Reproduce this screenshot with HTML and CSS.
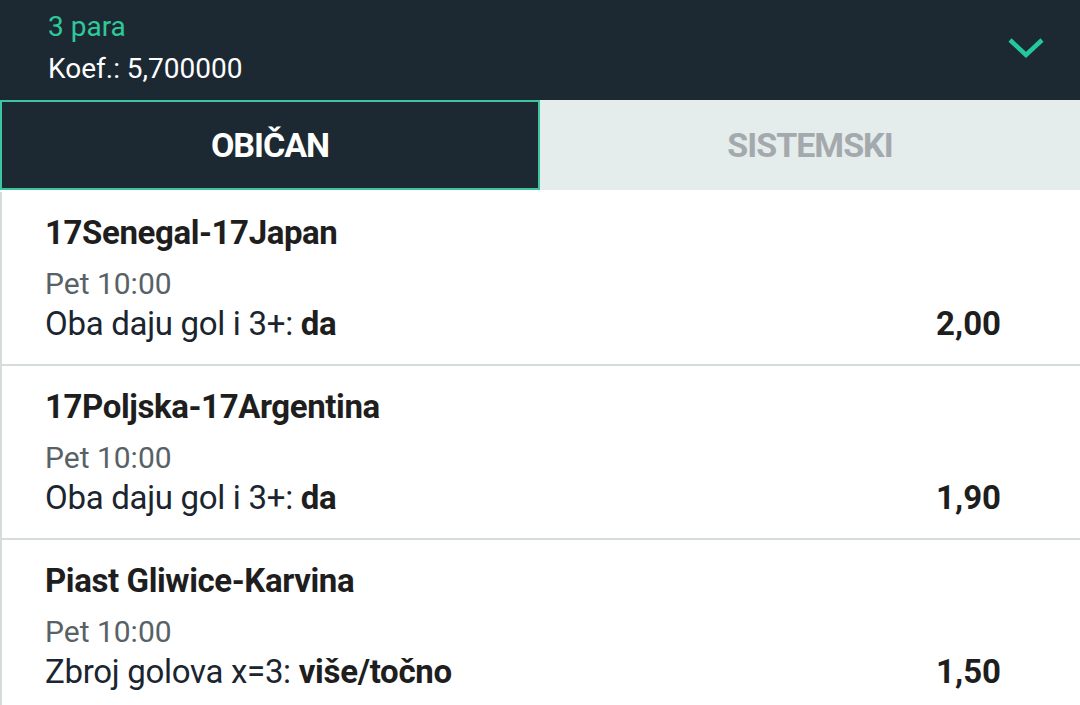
FILE: index.html
```html
<!DOCTYPE html>
<html lang="hr">
<head>
    <meta charset="UTF-8">
    <meta name="viewport" content="width=device-width, initial-scale=1.0">
    <title>Listić</title>
    <link rel="stylesheet" href="styles.css">
</head>
<body>
    <div class="summary">
        <div class="summary-text">
            <div class="pairs">3 para</div>
            <div class="odds-total">Koef.: 5,700000</div>
        </div>
        <svg class="chevron" width="40" height="24" viewBox="0 0 40 24">
            <polyline points="4,4 20,19 36,4" fill="none" stroke="#23c99a" stroke-width="4.5"/>
        </svg>
    </div>

    <div class="tabs">
        <div class="tab active">OBIČAN</div>
        <div class="tab">SISTEMSKI</div>
    </div>

    <div class="list">
        <div class="item">
            <div class="info">
                <div class="match">17Senegal-17Japan</div>
                <div class="time">Pet 10:00</div>
                <div class="bet">Oba daju gol i 3+: <b>da</b></div>
            </div>
            <div class="odd">2,00</div>
        </div>
        <div class="item">
            <div class="info">
                <div class="match">17Poljska-17Argentina</div>
                <div class="time">Pet 10:00</div>
                <div class="bet">Oba daju gol i 3+: <b>da</b></div>
            </div>
            <div class="odd">1,90</div>
        </div>
        <div class="item">
            <div class="info">
                <div class="match">Piast Gliwice-Karvina</div>
                <div class="time">Pet 10:00</div>
                <div class="bet">Zbroj golova x=3: <b>više/točno</b></div>
            </div>
            <div class="odd">1,50</div>
        </div>
    </div>
</body>
</html>
```

FILE: styles.css
```css
body {
    margin: 0;
    font-family: Roboto, "Liberation Sans", sans-serif;
    background-color: #fff;
    color: #1b2530;
    overflow: hidden;
}
.summary {
    display: flex;
    align-items: center;
    justify-content: space-between;
    height: 100px;
    padding: 0 34px 0 48px;
    background-color: #1c2932;
    box-sizing: border-box;
}
.summary-text {
    padding-bottom: 4px;
}
.pairs {
    color: #2ec99a;
    font-size: 28px;
    line-height: 42px;
}
.odds-total {
    color: #fff;
    font-size: 28px;
    line-height: 42px;
}
.chevron {
    margin-top: -4px;
}
.tabs {
    display: flex;
    height: 90px;
    background-color: #e4ecec;
}
.tab {
    flex: 1;
    display: flex;
    align-items: center;
    justify-content: center;
    font-size: 34px;
    font-weight: 700;
    color: #a3a9ac;
    letter-spacing: -1px;
}
.tab.active {
    flex: 0 0 540px;
    box-sizing: border-box;
    background-color: #1c2932;
    border: 2px solid #3cc59e;
    color: #fff;
}
.list {
    margin-top: 2px;
    border-left: 2px solid #d6dbdc;
}
.item {
    display: flex;
    align-items: flex-end;
    padding: 20px 79px 20px 43px;
    border-bottom: 2px solid #d6dbdc;
}
.info {
    flex: 1;
}
.match {
    font-size: 33px;
    font-weight: 700;
    line-height: 42px;
    color: #1e1e1e;
    letter-spacing: -0.4px;
}
.time {
    margin-top: 10px;
    font-size: 30px;
    line-height: 40px;
    color: #586266;
}
.bet {
    font-size: 33px;
    line-height: 40px;
    letter-spacing: -0.3px;
}
.bet b {
    color: #1e1e1e;
}
.odd {
    font-size: 33px;
    font-weight: 700;
    line-height: 40px;
    color: #1e1e1e;
}
```
